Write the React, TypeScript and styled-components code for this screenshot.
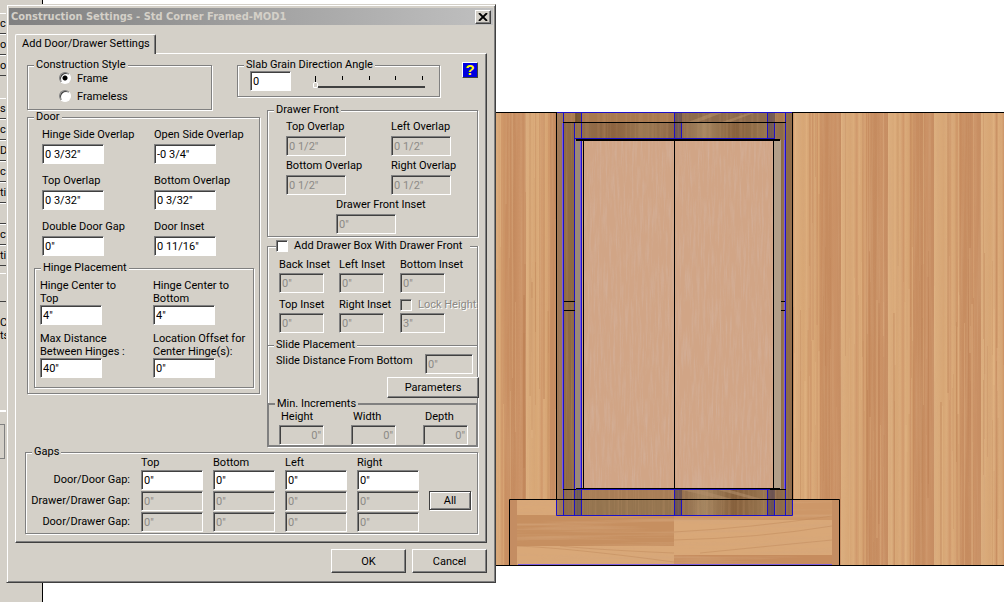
import React, { useId } from 'react';
import styled, { createGlobalStyle, css } from 'styled-components';

const face = '#d4d0c8';
const shade = '#808080';
const dark = '#404040';

const GlobalStyle = createGlobalStyle`
  *, *::before, *::after { box-sizing: border-box; }
  body {
    margin: 0;
    background: #fff;
    overflow: hidden;
    font-family: Roboto, "Liberation Sans", Arial, sans-serif;
    font-size: 11px;
    line-height: 13px;
    color: #000;
  }
  button, input { font: inherit; color: inherit; margin: 0; }
`;

const Desktop = styled.div`
  position: relative;
  display: flex;
  min-height: 100vh;
  overflow: hidden;
`;

/* ---------- tool palette behind the dialog ---------- */

const Palette = styled.nav`
  flex: none;
  width: 43px;
  padding-top: 13px;
  background: ${face};
  border-right: 1px solid #000;
  display: flex;
  flex-direction: column;
  align-items: flex-start;
`;

const PaletteGroup = styled.div<{ $before?: number }>`
  display: flex;
  flex-direction: column;
  width: 7px;
  margin-top: ${p => p.$before ?? 0}px;
`;

const PaletteButton = styled.button<{ $tall?: boolean }>`
  height: ${p => (p.$tall ? 29 : 21)}px;
  width: 7px;
  padding: 0;
  display: flex;
  justify-content: flex-start;
  align-items: center;
  background: ${face};
  border: 0;
  border-top: 1px solid #fff;
  border-bottom: 1px solid ${dark};
`;

const PaletteNote = styled.p`
  margin: 14px 0 0;
  width: 7px;
  height: 96px;
  display: flex;
  flex-direction: column;
  border-bottom: 2px solid #fff;
`;

const PaletteFrame = styled.div`
  width: 5px;
  height: 35px;
  margin-top: 12px;
  border: 1px solid ${shade};
  border-left: 0;
`;

/* ---------- drawing view ---------- */

const View = styled.main`
  flex: 1;
  min-width: 0;
  padding-top: 112px;
`;

const Drawing = styled.svg`
  display: block;
  width: 100%;
  height: 454px;
`;

/* ---------- dialog ---------- */

const Dialog = styled.section`
  position: absolute;
  left: 6px;
  top: 4px;
  width: 490px;
  padding: 3px 2px 9px;
  background: ${face};
  border: 1px solid;
  border-color: ${face} ${dark} ${dark} ${face};
  box-shadow: inset 1px 1px #fff, inset -1px -1px ${shade};
`;

const TitleBar = styled.header`
  display: flex;
  align-items: center;
  justify-content: space-between;
  height: 17px;
  padding: 0 2px;
  background: linear-gradient(to right, #808080, #c0c0c0);
`;

const Title = styled.h1`
  margin: 0;
  font: bold 11px/15px "DejaVu Sans Condensed", "DejaVu Sans", sans-serif;
  color: ${face};
  white-space: nowrap;
`;

const raised = css`
  background: ${face};
  border: 1px solid;
  border-color: #fff ${dark} ${dark} #fff;
  box-shadow: inset -1px -1px ${shade};
  border-radius: 0;
`;

const CloseButton = styled.button`
  ${raised}
  width: 16px;
  height: 14px;
  padding: 0;
  display: flex;
  align-items: center;
  justify-content: center;
`;

const TabStrip = styled.div`
  display: flex;
  padding: 9px 0 0 6px;
`;

const Tab = styled.button`
  position: relative;
  height: 20px;
  width: 141px;
  margin-bottom: -1px;
  padding: 0 0 2px 6px;
  text-align: left;
  background: ${face};
  border: 1px solid;
  border-color: #fff ${dark} ${face} #fff;
  border-bottom: 0;
  border-radius: 2px 2px 0 0;
  box-shadow: inset -1px 0 ${shade};
  white-space: nowrap;
`;

const TabPanel = styled.div`
  margin: 0 6px;
  padding: 6px 8px 8px 11px;
  border: 1px solid;
  border-color: #fff ${dark} ${dark} #fff;
  box-shadow: inset -1px -1px ${shade};
`;

const DialogActions = styled.footer`
  display: flex;
  justify-content: flex-end;
  gap: 6px;
  padding: 6px 6px 0 0;
`;

const PushButton = styled.button<{ $width: number; $height?: number; $default?: boolean }>`
  ${raised}
  width: ${p => p.$width}px;
  height: ${p => p.$height ?? 24}px;
  padding: 0;
  text-align: center;
  ${p => p.$default && css`
    border-color: ${dark};
    box-shadow: inset 1px 1px #fff, inset -1px -1px ${shade}, 1px 1px #fff;
  `}
`;

/* ---------- group boxes ---------- */

const Group = styled.fieldset<{ $width?: number; $height?: number; $open?: boolean }>`
  margin: 0;
  min-width: 0;
  padding: 0;
  width: ${p => (p.$width ? `${p.$width}px` : 'auto')};
  height: ${p => (p.$height ? `${p.$height}px` : 'auto')};
  border: 1px solid ${shade};
  box-shadow: 1px 1px #fff, inset 1px 1px #fff;
  ${p => p.$open && css`
    border-bottom: 0;
    box-shadow: 1px 0 #fff, inset 1px 1px #fff;
  `}
`;

const Legend = styled.legend<{ $indent?: number }>`
  margin-left: ${p => p.$indent ?? 6}px;
  padding: 0 2px;
  height: 10px;
  line-height: 10px;
  display: flex;
  align-items: center;
  background: ${face};
  white-space: nowrap;
`;

const TopRow = styled.div`
  display: flex;
  align-items: flex-start;
`;

const SlabGroup = styled(Group)`
  margin-left: 25px;
`;

const SlabBody = styled.div`
  display: flex;
  gap: 20px;
  padding: 1px 0 0 12px;
`;

const Radios = styled.div`
  display: flex;
  flex-direction: column;
  padding-left: 31px;
`;

const Choice = styled.label`
  display: flex;
  align-items: center;
  gap: 6px;
  height: 18px;
  padding-bottom: 2px;
`;

const Radio = styled.input`
  appearance: none;
  width: 12px;
  height: 12px;
  border-radius: 50%;
  border: 1px solid;
  border-color: ${shade} #fff #fff ${shade};
  background: #fff;
  box-shadow: inset 1px 1px ${dark};
  &:checked {
    background: radial-gradient(circle, #000 0 2px, #fff 3px);
  }
`;

const CheckBox = styled.input`
  appearance: none;
  flex: none;
  width: 12px;
  height: 12px;
  border: 1px solid;
  border-color: ${shade} #fff #fff ${shade};
  background: #fff;
  box-shadow: inset 1px 1px ${dark};
  &:disabled { background: ${face}; }
`;

const HelpButton = styled.button`
  width: 16px;
  height: 16px;
  margin: 2px 0 0 22px;
  padding: 0;
  background: #0000e0;
  border: 1px solid;
  border-color: #fff ${dark} ${dark} #fff;
  color: #ff0;
  font: bold 15px/14px "Liberation Sans", sans-serif;
`;

const SliderBox = styled.div`
  width: 118px;
  padding-top: 5px;
`;

const Ticks = styled.div`
  display: flex;
  justify-content: space-between;
  padding: 0 6px 0 4px;
`;

const Tick = styled.span<{ $tall?: boolean }>`
  width: 1px;
  height: ${p => (p.$tall ? 6 : 4)}px;
  background: #000;
`;

const Slider = styled.input`
  appearance: none;
  display: block;
  width: 114px;
  height: 6px;
  margin: 0 0 0 2px;
  background: linear-gradient(${dark}, ${dark}) 4px 4px / 108px 2px no-repeat;
  &::-webkit-slider-thumb {
    appearance: none;
    width: 5px;
    height: 6px;
    background: ${face};
    border: 1px solid #fff;
    border-radius: 2px 2px 0 0;
  }
`;

const Columns = styled.div`
  display: flex;
  align-items: flex-start;
  gap: 7px;
  margin-top: -5px;
`;

const LeftColumn = styled.div`
  width: 233px;
  padding-top: 7px;
`;

const RightColumn = styled.div`
  flex: 1;
  min-width: 0;
  display: flex;
  flex-direction: column;
`;

const TextBox = styled.input<{ $width: number; $right?: boolean }>`
  display: block;
  width: ${p => p.$width}px;
  height: 20px;
  margin-bottom: -1px;
  padding: 0 2px;
  border: 1px solid;
  border-color: ${shade} #fff #fff ${shade};
  border-radius: 0;
  background: #fff;
  box-shadow: inset 1px 1px ${dark};
  text-align: ${p => (p.$right ? 'right' : 'left')};
  outline: 0;
  &:disabled {
    background: ${face};
    color: #8c8a86;
  }
`;

const FieldBox = styled.div<{ $gap: number }>`
  display: flex;
  flex-direction: column;
  align-items: flex-start;
  gap: ${p => p.$gap}px;
`;

const FieldLabel = styled.label`
  white-space: pre;
`;

const FieldGrid = styled.div<{ $cols: string; $rowGap?: number; $pad: string }>`
  display: grid;
  grid-template-columns: ${p => p.$cols};
  row-gap: ${p => p.$rowGap ?? 0}px;
  padding: ${p => p.$pad};
`;

const HingeGroup = styled(Group)`
  margin: 8px 5px 5px 6px;
`;

const BoxGroup = styled(Group)`
  margin-top: 4px;
`;

const StackedGroup = styled(Group)`
  margin-top: -5px;
`;

const LegendCheck = styled(Legend)`
  padding: 0 8px 0 0;
  gap: 6px;
`;

const LegendLabel = styled.label`
  white-space: nowrap;
`;

const WideRow = styled.div`
  grid-column: 1 / -1;
  display: flex;
  justify-content: flex-start;
  padding-left: 50px;
`;

const LockChoice = styled.label`
  display: flex;
  align-items: center;
  gap: 6px;
  height: 13px;
  white-space: nowrap;
  color: #8c8a86;
  text-shadow: 1px 1px #fff;
`;

const SlideRow = styled.div`
  display: flex;
  justify-content: space-between;
  align-items: flex-start;
  padding: 4px 4px 0 8px;
  white-space: nowrap;
`;

const SlideActions = styled.div`
  display: flex;
  justify-content: flex-end;
  padding: 4px 0 6px;
  margin-right: -2px;
`;

const MinGroup = styled(StackedGroup)`
  border: 2px solid ${shade};
  box-shadow: 1px 1px #fff;
`;

const MinLabel = styled.label`
  padding-left: 2px;
`;

const GapsGroup = styled(Group)`
  margin: 0 0 0 -2px;
`;

const GapsGrid = styled.div`
  display: grid;
  grid-template-columns: 104px repeat(4, 61px) 42px;
  column-gap: 11px;
  row-gap: 2px;
  padding: 0 0 2px;
  align-items: center;
`;

const RowLabel = styled.label`
  text-align: right;
  white-space: nowrap;
`;

const ColumnLabel = styled.span`
  margin-bottom: -1px;
  line-height: 12px;
`;

/* ---------- parts ---------- */

type FieldProps = { label: string; value: string; width?: number; gap?: number; disabled?: boolean };

function Field({ label, value, width = 62, gap = 3, disabled }: FieldProps) {
  const id = useId();
  return (
    <FieldBox $gap={gap}>
      <FieldLabel htmlFor={id}>{label}</FieldLabel>
      <TextBox id={id} $width={width} defaultValue={value} disabled={disabled} />
    </FieldBox>
  );
}

function MinField({ label }: { label: string }) {
  const id = useId();
  return (
    <FieldBox $gap={2}>
      <MinLabel htmlFor={id}>{label}</MinLabel>
      <TextBox id={id} $width={45} $right defaultValue={'0"'} disabled />
    </FieldBox>
  );
}

function GapRow({ label, disabled, action }: { label: string; disabled?: boolean; action?: React.ReactNode }) {
  const id = useId();
  return (
    <>
      <RowLabel htmlFor={id}>{label}</RowLabel>
      {['Top', 'Bottom', 'Left', 'Right'].map((side, i) => (
        <TextBox
          key={side}
          id={i === 0 ? id : undefined}
          aria-label={`${label} ${side}`}
          $width={62}
          defaultValue={'0"'}
          disabled={disabled}
        />
      ))}
      {action ?? <span />}
    </>
  );
}

/* ---------- cabinet drawing ---------- */

const streaks = Array.from({ length: 300 }, (_, i) => {
  const r = (n: number) => {
    const s = Math.sin(i * 12.9898 + n * 78.233) * 43758.5453;
    return s - Math.floor(s);
  };
  const x = 490 + Math.floor(r(1) * 514);
  const y = r(2) < 0.4 ? 113 : 113 + Math.floor(r(2) * 330);
  return { x, y, h: 60 + Math.floor(r(3) * 260), light: r(4) > 0.5, o: 0.1 + r(5) * 0.25 };
});

const plankStops: [number, string][] = [
  [0, '#dcaf7f'], [0.2, '#d7a675'], [0.27, '#dbac7b'], [0.34, '#cf976a'], [0.38, '#dbab7a'],
  [0.46, '#d6a473'], [0.49, '#cc9265'], [0.52, '#d7a472'], [0.55, '#c98f62'], [0.75, '#c58b5f'],
  [0.85, '#cb9266'], [1, '#c68d62'],
];

const blueLines = [
  'M557 112.5H793', 'M563.5 112V515', 'M574.5 123V515', 'M581.5 112V515', 'M785.5 112V515',
  'M674.5 112V138', 'M681.5 123V138', 'M767.5 112V138', 'M774.5 123V138',
  'M674.5 489V515', 'M681.5 500V515', 'M767.5 489V515', 'M774.5 500V515',
  'M574 138.5H775', 'M576 489.5H770', 'M556.5 499V515.5H792.5V499',
];

const blackLines = [
  'M0 112.5H557', 'M793 112.5H2000', 'M0 565.5H2000', 'M556.5 112V499', 'M792.5 112V499',
  'M563 122.5H786', 'M583.5 140V489', 'M674.5 140V489', 'M773.5 140V489', 'M563 489.5H576M770 489.5H786',
  'M576 488.5H780', 'M509.5 565V499.5H839.5V565', 'M564 301.5H575M564 310.5H575M781 301.5H785M781 310.5H785',
];

function Cabinet() {
  return (
    <Drawing role="img" aria-label="Corner cabinet, front view">
      <defs>
        <filter id="grainV" x="0" y="0" width="100%" height="100%">
          <feTurbulence type="fractalNoise" baseFrequency="0.35 0.006" numOctaves="3" seed="4" />
          <feColorMatrix values="0 0 0 0 0.66  0 0 0 0 0.38  0 0 0 0 0.2  2.2 0 0 0 -0.95" />
        </filter>
        <filter id="grainH" x="0" y="0" width="100%" height="100%">
          <feTurbulence type="fractalNoise" baseFrequency="0.008 0.3" numOctaves="3" seed="9" />
          <feColorMatrix values="0 0 0 0 0.66  0 0 0 0 0.38  0 0 0 0 0.2  2.4 0 0 0 -1" />
        </filter>
        <filter id="grainDoor" x="0" y="0" width="100%" height="100%">
          <feTurbulence type="fractalNoise" baseFrequency="0.5 0.03" numOctaves="3" seed="2" />
          <feColorMatrix values="0 0 0 0 0.66  0 0 0 0 0.46  0 0 0 0 0.36  2 0 0 0 -0.85" />
        </filter>
        <linearGradient id="planksLeft" gradientUnits="userSpaceOnUse" x1="479" x2="526" y1="0" y2="0" spreadMethod="repeat">
          {plankStops.map(([o, c]) => <stop key={o} offset={o} stopColor={c} />)}
        </linearGradient>
        <linearGradient id="planksRight" gradientUnits="userSpaceOnUse" x1="841" x2="887.6" y1="0" y2="0" spreadMethod="repeat">
          {plankStops.map(([o, c]) => <stop key={o} offset={o} stopColor={c} />)}
        </linearGradient>
        <linearGradient id="rail">
          <stop offset="0" stopColor="#94714d" />
          <stop offset="0.2" stopColor="#8c6340" />
          <stop offset="0.35" stopColor="#9a7852" />
          <stop offset="0.5" stopColor="#8a6444" />
          <stop offset="0.65" stopColor="#a48560" />
          <stop offset="0.8" stopColor="#86603c" />
          <stop offset="1" stopColor="#9a7a54" />
        </linearGradient>
      </defs>
      <g transform="translate(-43 -112)">
        <rect x="0" y="112" width="674" height="454" fill="url(#planksLeft)" />
        <rect x="674" y="112" width="1326" height="454" fill="url(#planksRight)" />
        <rect x="550" y="112" width="7" height="454" fill="#c68d62" />
        {streaks.map((s, i) => (
          <rect key={i} x={s.x} y={s.y} width={1 + (i % 3 === 0 ? 1 : 0)} height={Math.min(s.h, 565 - s.y)} fill={s.light ? '#e4b888' : '#b87b50'} opacity={s.o} />
        ))}
        <rect x="43" y="112" width="1200" height="454" filter="url(#grainV)" opacity="0.5" />

        <rect x="510" y="500" width="329" height="65" fill="#d9a878" />
        <rect x="510" y="500" width="7" height="65" fill="#c48d62" />
        <rect x="832" y="500" width="7" height="65" fill="#c48d62" />
        <rect x="517" y="515" width="157" height="31" fill="#c68f60" />
        <rect x="674" y="500" width="158" height="20" fill="#cd9768" />
        <rect x="674" y="555" width="158" height="10" fill="#c68c5e" />
        <rect x="517" y="500" width="315" height="65" filter="url(#grainH)" opacity="0.6" />
        <path d="M517 546Q570 548 674 562M560 546Q600 550 674 553M674 532Q750 528 832 516M674 540Q760 538 832 526M700 553Q770 546 832 540" fill="none" stroke="#c08a5c" opacity="0.5" />

        <rect x="557" y="112" width="236" height="403" fill="#8d6a4a" />
        <rect x="557" y="112" width="7" height="403" fill="#9c7757" />
        <rect x="564" y="123" width="11" height="366" fill="#8e6943" />
        <rect x="563" y="113" width="222" height="10" fill="#a8794f" />
        <rect x="682" y="113" width="85" height="10" fill="#8d6b4c" />
        <path d="M688 122L712 113H722L698 122M722 122L748 113H754L730 122" fill="#b18c66" opacity="0.6" />
        <rect x="575" y="123" width="199" height="16" fill="url(#rail)" />
        <rect x="575" y="490" width="199" height="25" fill="url(#rail)" />
        <rect x="582" y="490" width="92" height="9" fill="#a77d56" />
        <rect x="582" y="500" width="92" height="15" fill="#94744f" />
        <path d="M682 490L720 499H732L700 490M718 490L752 499H762L730 490" fill="#ad8a68" opacity="0.6" />
        <rect x="575" y="113" width="7" height="10" fill="#75532f" />
        <rect x="575" y="490" width="7" height="25" fill="#6d5a55" />
        <g fill="#6b5352">
          <rect x="675" y="113" width="7" height="26" />
          <rect x="768" y="113" width="7" height="26" />
          <rect x="675" y="490" width="7" height="25" />
          <rect x="768" y="490" width="7" height="25" />
        </g>
        <rect x="557" y="112" width="236" height="403" filter="url(#grainV)" opacity="0.25" />
        <rect x="575" y="140" width="7" height="349" fill="#9b8878" />
        <rect x="582" y="140" width="192" height="349" fill="#d1a586" />
        <rect x="583" y="140" width="190" height="349" filter="url(#grainDoor)" opacity="0.65" />
        <rect x="774" y="140" width="7" height="349" fill="#b29f89" />

        <g fill="none" stroke="#1c10c8">
          {blueLines.map(d => <path key={d} d={d} />)}
        </g>
        <g fill="none" stroke="#7a5ce0">
          <path d="M562.5 123V489M580.5 140V489M784.5 140V489M518 564.5H832" />
        </g>
        <g fill="none" stroke="#000">
          {blackLines.map(d => <path key={d} d={d} />)}
          <path d="M576 140H780" strokeWidth="2" />
        </g>
      </g>
    </Drawing>
  );
}

/* ---------- page ---------- */

export default function App() {
  return (
    <>
      <GlobalStyle />
      <Desktop>
        <Palette aria-label="Tools">
          <PaletteGroup>
            {['c', 'o', 'or'].map(t => <PaletteButton key={t}>{t}</PaletteButton>)}
          </PaletteGroup>
          <PaletteGroup $before={22}>
            {['s', 'c', 'D', 'c', 'ti', '', 'ct', 'tic'].map((t, i) => <PaletteButton key={i}>{t}</PaletteButton>)}
          </PaletteGroup>
          <PaletteGroup $before={7}>
            <PaletteButton $tall aria-label="More" />
          </PaletteGroup>
          <PaletteNote>
            <span>C</span>
            <span>ts</span>
          </PaletteNote>
          <PaletteFrame />
        </Palette>

        <View>
          <Cabinet />
        </View>

        <Dialog role="dialog" aria-labelledby="dialog-title">
          <TitleBar>
            <Title id="dialog-title">Construction Settings - Std Corner Framed-MOD1</Title>
            <CloseButton aria-label="Close">
              <svg width="10" height="8" viewBox="0 0 10 8">
                <path d="M1 0L9 8M9 0L1 8" stroke="#000" strokeWidth="1.8" />
              </svg>
            </CloseButton>
          </TitleBar>

          <TabStrip role="tablist">
            <Tab role="tab" aria-selected="true">Add Door/Drawer Settings</Tab>
          </TabStrip>

          <TabPanel role="tabpanel">
            <TopRow>
              <Group $width={185} $height={50}>
                <Legend>Construction Style</Legend>
                <Radios>
                  <Choice><Radio type="radio" name="style" defaultChecked />Frame</Choice>
                  <Choice><Radio type="radio" name="style" />Frameless</Choice>
                </Radios>
              </Group>
              <SlabGroup $width={203} $height={37}>
                <Legend>Slab Grain Direction Angle</Legend>
                <SlabBody>
                  <TextBox $width={41} defaultValue="0" aria-label="Slab grain direction angle" />
                  <SliderBox>
                    <Ticks>
                      <Tick $tall /><Tick /><Tick /><Tick /><Tick />
                    </Ticks>
                    <Slider type="range" min={0} max={360} defaultValue={0} aria-label="Angle" />
                  </SliderBox>
                </SlabBody>
              </SlabGroup>
              <HelpButton aria-label="Help">?</HelpButton>
            </TopRow>

            <Columns>
              <LeftColumn>
                <Group>
                  <Legend>Door</Legend>
                  <FieldGrid $cols="112px 1fr" $rowGap={11} $pad="6px 0 0 14px">
                    <Field label="Hinge Side Overlap" value={'0 3/32"'} />
                    <Field label="Open Side Overlap" value={'-0 3/4"'} />
                    <Field label="Top Overlap" value={'0 3/32"'} />
                    <Field label="Bottom Overlap" value={'0 3/32"'} />
                    <Field label="Double Door Gap" value={'0"'} />
                    <Field label="Door Inset" value={'0 11/16"'} />
                  </FieldGrid>
                  <HingeGroup>
                    <Legend>Hinge Placement</Legend>
                    <FieldGrid $cols="113px 1fr" $rowGap={8} $pad="6px 0 10px 5px">
                      <Field gap={0} label={'Hinge Center to\nTop'} value={'4"'} />
                      <Field gap={0} label={'Hinge Center to\nBottom'} value={'4"'} />
                      <Field gap={0} label={'Max Distance\nBetween Hinges :'} value={'40"'} />
                      <Field gap={0} label={'Location Offset for\nCenter Hinge(s):'} value={'0"'} />
                    </FieldGrid>
                  </HingeGroup>
                </Group>
              </LeftColumn>

              <RightColumn>
                <Group>
                  <Legend>Drawer Front</Legend>
                  <FieldGrid $cols="105px 1fr" $rowGap={4} $pad="5px 0 3px 18px">
                    <Field disabled width={60} label="Top Overlap" value={'0 1/2"'} />
                    <Field disabled width={60} label="Left Overlap" value={'0 1/2"'} />
                    <Field disabled width={60} label="Bottom Overlap" value={'0 1/2"'} />
                    <Field disabled width={60} label="Right Overlap" value={'0 1/2"'} />
                    <WideRow>
                      <Field disabled width={60} label="Drawer Front Inset" value={'0"'} />
                    </WideRow>
                  </FieldGrid>
                </Group>

                <BoxGroup $open>
                  <LegendCheck $indent={8}>
                    <CheckBox type="checkbox" id="add-box" />
                    <LegendLabel htmlFor="add-box">Add Drawer Box With Drawer Front</LegendLabel>
                  </LegendCheck>
                  <FieldGrid $cols="60px 61px 1fr" $rowGap={6} $pad="7px 0 13px 11px">
                    <Field disabled gap={2} width={45} label="Back Inset" value={'0"'} />
                    <Field disabled gap={2} width={45} label="Left Inset" value={'0"'} />
                    <Field disabled gap={2} width={45} label="Bottom Inset" value={'0"'} />
                    <Field disabled gap={2} width={45} label="Top Inset" value={'0"'} />
                    <Field disabled gap={2} width={45} label="Right Inset" value={'0"'} />
                    <FieldBox $gap={2}>
                      <LockChoice><CheckBox type="checkbox" disabled />Lock Height</LockChoice>
                      <TextBox $width={45} defaultValue={'3"'} disabled aria-label="Locked height" />
                    </FieldBox>
                  </FieldGrid>
                </BoxGroup>

                <StackedGroup $open>
                  <Legend>Slide Placement</Legend>
                  <SlideRow>
                    <label htmlFor="slide-distance">Slide Distance From Bottom</label>
                    <TextBox id="slide-distance" $width={48} defaultValue={'0"'} disabled />
                  </SlideRow>
                  <SlideActions>
                    <PushButton $width={92} $height={21}>Parameters</PushButton>
                  </SlideActions>
                </StackedGroup>

                <MinGroup>
                  <Legend>Min. Increments</Legend>
                  <FieldGrid $cols="72px 72px 1fr" $pad="1px 0 1px 10px">
                    <MinField label="Height" />
                    <MinField label="Width" />
                    <MinField label="Depth" />
                  </FieldGrid>
                </MinGroup>
              </RightColumn>
            </Columns>

            <GapsGroup>
              <Legend>Gaps</Legend>
              <GapsGrid>
                <span />
                <ColumnLabel>Top</ColumnLabel>
                <ColumnLabel>Bottom</ColumnLabel>
                <ColumnLabel>Left</ColumnLabel>
                <ColumnLabel>Right</ColumnLabel>
                <span />
                <GapRow label="Door/Door Gap:" />
                <GapRow
                  label="Drawer/Drawer Gap:"
                  disabled
                  action={<PushButton $width={42} $height={19} $default>All</PushButton>}
                />
                <GapRow label="Door/Drawer Gap:" disabled />
              </GapsGrid>
            </GapsGroup>
          </TabPanel>

          <DialogActions>
            <PushButton $width={75}>OK</PushButton>
            <PushButton $width={75}>Cancel</PushButton>
          </DialogActions>
        </Dialog>
      </Desktop>
    </>
  );
}
